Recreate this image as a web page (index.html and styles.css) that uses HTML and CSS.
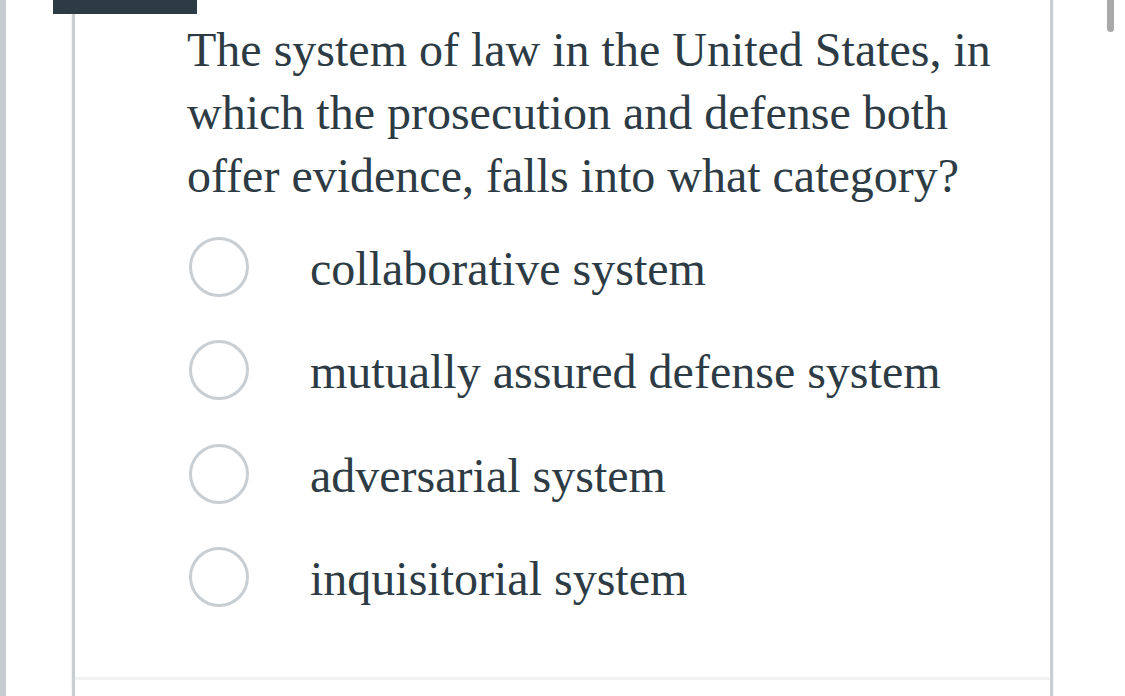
FILE: index.html
```html
<!DOCTYPE html>
<html lang="en">
<head>
<meta charset="utf-8">
<title>Quiz question</title>
<link rel="stylesheet" href="styles.css">
</head>
<body>
<div class="shell">
  <div class="rail"></div>
  <div class="card">
    <div class="content">
      <p class="question">The system of law in the United States, in which the prosecution and defense both offer evidence, falls into what category?</p>
      <div class="options">
        <label class="option"><span class="radio"></span><span class="label">collaborative system</span></label>
        <label class="option"><span class="radio"></span><span class="label">mutually assured defense system</span></label>
        <label class="option"><span class="radio"></span><span class="label">adversarial system</span></label>
        <label class="option"><span class="radio"></span><span class="label">inquisitorial system</span></label>
      </div>
    </div>
    <div class="footer"></div>
  </div>
</div>
<div class="tab"></div>
<div class="thumb"></div>
</body>
</html>
```

FILE: styles.css
```css
html, body {
  margin: 0;
  padding: 0;
}
body {
  width: 1125px;
  height: 696px;
  overflow: hidden;
  background: #ffffff;
  position: relative;
  font-family: "Liberation Serif", "Times New Roman", serif;
  color: #2d3b45;
}
.shell {
  display: flex;
  height: 100%;
}
.rail {
  width: 6px;
  flex-shrink: 0;
  background: #c8ccd0;
}
.card {
  margin-left: 66px;
  width: 981px;
  box-sizing: border-box;
  border-left: 3px solid #c9ced2;
  border-right: 3px solid #c9ced2;
  box-shadow: 0 0 2px rgba(0, 0, 0, 0.12);
  display: flex;
  flex-direction: column;
  height: 100%;
}
.content {
  flex: 1;
  padding: 18px 0 0 112px;
}
.question {
  margin: 0 0 29.5px 0;
  max-width: 840px;
  font-size: 48px;
  line-height: 63px;
}
.options {
  display: flex;
  flex-direction: column;
  gap: 43.5px;
}
.option {
  display: flex;
  align-items: center;
  height: 60px;
}
.radio {
  width: 60px;
  height: 60px;
  box-sizing: border-box;
  border: 3px solid #c9ced2;
  border-radius: 50%;
  margin-left: 2px;
  flex-shrink: 0;
}
.label {
  margin-left: 61px;
  font-size: 48px;
  line-height: 61px;
  padding-top: 3px;
  white-space: nowrap;
}
.footer {
  height: 16px;
  border-top: 3px solid #f1f2f3;
}
.tab {
  position: absolute;
  left: 53px;
  top: 0;
  width: 144px;
  height: 14px;
  background: #2d3b45;
}
.thumb {
  position: absolute;
  left: 1107px;
  top: 0;
  width: 7px;
  height: 32px;
  background: #a9a9a9;
  border-radius: 0 0 4px 4px;
}
```
